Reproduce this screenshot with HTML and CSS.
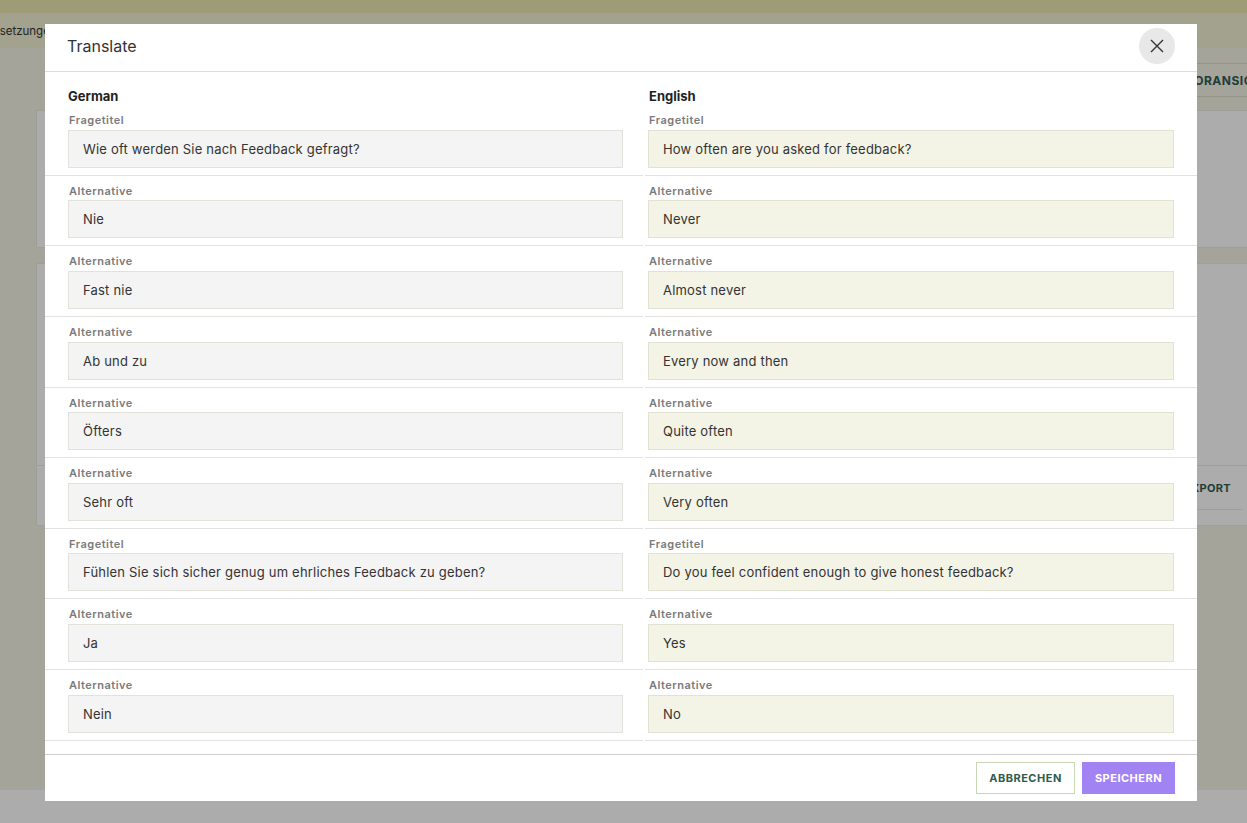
FILE: index.html
```html
<!DOCTYPE html>
<html lang="de">
<head>
<meta charset="utf-8">
<title>Translate</title>
<link rel="stylesheet" href="styles.css">
</head>
<body>
<div class="page">
  <div class="topbar"></div>
  <div class="subbar"><span class="crumb">Übersetzungen</span></div>
  <main class="content">
    <div class="toolbar"><button class="ghost-btn">VORANSICHT</button></div>
    <section class="card card-one"></section>
    <section class="card card-two">
      <div class="card-actions"><button class="ghost-btn export">EXPORT</button></div>
    </section>
  </main>
</div>
<div class="overlay"></div>

<div class="modal" role="dialog">
  <header class="modal-head">
    <h2 class="modal-title">Translate</h2>
    <button class="close-btn" aria-label="close">
      <svg width="14" height="14" viewBox="0 0 14 14"><path d="M1 1 L13 13 M13 1 L1 13" stroke="#333" stroke-width="1.4" fill="none"/></svg>
    </button>
  </header>
  <div class="modal-body">
    <div class="row row-head">
      <div class="cell left"><span class="lang">German</span></div>
      <div class="cell right"><span class="lang">English</span></div>
    </div>

    <div class="row">
      <div class="cell left"><div class="label">Fragetitel</div><div class="field">Wie oft werden Sie nach Feedback gefragt?</div></div>
      <div class="cell right"><div class="label">Fragetitel</div><div class="field en">How often are you asked for feedback?</div></div>
    </div>
    <div class="row">
      <div class="cell left"><div class="label">Alternative</div><div class="field">Nie</div></div>
      <div class="cell right"><div class="label">Alternative</div><div class="field en">Never</div></div>
    </div>
    <div class="row">
      <div class="cell left"><div class="label">Alternative</div><div class="field">Fast nie</div></div>
      <div class="cell right"><div class="label">Alternative</div><div class="field en">Almost never</div></div>
    </div>
    <div class="row">
      <div class="cell left"><div class="label">Alternative</div><div class="field">Ab und zu</div></div>
      <div class="cell right"><div class="label">Alternative</div><div class="field en">Every now and then</div></div>
    </div>
    <div class="row">
      <div class="cell left"><div class="label">Alternative</div><div class="field">Öfters</div></div>
      <div class="cell right"><div class="label">Alternative</div><div class="field en">Quite often</div></div>
    </div>
    <div class="row">
      <div class="cell left"><div class="label">Alternative</div><div class="field">Sehr oft</div></div>
      <div class="cell right"><div class="label">Alternative</div><div class="field en">Very often</div></div>
    </div>
    <div class="row">
      <div class="cell left"><div class="label">Fragetitel</div><div class="field">Fühlen Sie sich sicher genug um ehrliches Feedback zu geben?</div></div>
      <div class="cell right"><div class="label">Fragetitel</div><div class="field en">Do you feel confident enough to give honest feedback?</div></div>
    </div>
    <div class="row">
      <div class="cell left"><div class="label">Alternative</div><div class="field">Ja</div></div>
      <div class="cell right"><div class="label">Alternative</div><div class="field en">Yes</div></div>
    </div>
    <div class="row">
      <div class="cell left"><div class="label">Alternative</div><div class="field">Nein</div></div>
      <div class="cell right"><div class="label">Alternative</div><div class="field en">No</div></div>
    </div>
  </div>
  <footer class="modal-foot">
    <button class="btn btn-cancel">ABBRECHEN</button>
    <button class="btn btn-save">SPEICHERN</button>
  </footer>
</div>
</body>
</html>
```
FILE: styles.css
```css
* { box-sizing: border-box; }
html, body { margin: 0; padding: 0; overflow: hidden; }
body {
  width: 1247px;
  height: 823px;
  background: #ffffff;
  font-family: Inter, "Noto Sans", "Liberation Sans", sans-serif;
  color: #333;
}

/* underlying page */
.page { width: 1247px; }
.topbar { height: 13px; background: #e9e7b0; }
.subbar {
  height: 35px;
  background: #f2f1d4;
  display: flex;
  align-items: center;
  font-size: 11.5px;
  color: #333;
}
.crumb { margin-left: -27px; }
.content {
  height: 742px;
  background: #f3f3e5;
  padding: 15px 0 0 36px;
}
.toolbar {
  display: flex;
  justify-content: flex-end;
  margin-right: -37px;
}
.ghost-btn {
  height: 34px;
  padding: 0 12px;
  border: 1px solid #dcdccb;
  background: transparent;
  font-family: inherit;
  font-size: 12px;
  font-weight: 700;
  letter-spacing: 0.5px;
  color: #2f5b55;
}
.card {
  background: #fff;
  border: 1px solid #ecece4;
  margin-right: -14px;
}
.card-one { height: 138px; margin-top: 13px; }
.card-two {
  height: 263px;
  margin-top: 15px;
  display: flex;
  flex-direction: column;
  justify-content: flex-end;
  padding-bottom: 15px;
}
.card-actions {
  display: flex;
  justify-content: flex-end;
  padding-right: 17px;
  border-top: 1px solid #ecece4;
}
.export {
  height: 44px;
  border: none;
  border-bottom: 1px solid #ecece4;
  font-size: 11px;
  letter-spacing: 0.3px;
}

.overlay {
  position: fixed;
  inset: 0;
  background: rgba(0, 0, 0, 0.325);
}

/* modal */
.modal {
  position: fixed;
  left: 45px;
  top: 24px;
  width: 1152px;
  height: 777px;
  background: #fff;
  display: flex;
  flex-direction: column;
}
.modal-head {
  height: 48px;
  flex: none;
  border-bottom: 1px solid #dedede;
  display: flex;
  align-items: center;
  justify-content: space-between;
  padding: 0 22px 3px 22px;
}
.modal-title {
  margin: 0;
  font-size: 16px;
  font-weight: 400;
  color: #333;
}
.close-btn {
  width: 36px;
  height: 36px;
  border-radius: 50%;
  border: none;
  background: #e8e8e8;
  display: flex;
  align-items: center;
  justify-content: center;
  padding: 0;
}
.modal-body {
  flex: 1;
  overflow: hidden;
  padding-top: 15px;
}
.row {
  display: grid;
  grid-template-columns: 598px 552px;
  column-gap: 2px;
}
.cell {
  border-bottom: 1px solid #e2e2e2;
  padding-top: 8px;
  padding-bottom: 7px;
}
.cell.left { padding-left: 23px; padding-right: 20px; }
.cell.right { padding-left: 3px; padding-right: 23px; }
.row-head .cell {
  border-bottom: none;
  padding-top: 0;
  padding-bottom: 0;
  line-height: 16px;
  margin-bottom: 1px;
}
.lang {
  font-size: 13px;
  font-weight: 700;
  color: #222;
}
.row-head .cell.right .lang { padding-left: 1px; }
.label {
  font-size: 11px;
  font-weight: 600;
  line-height: 14.625px;
  letter-spacing: 0.5px;
  color: #7a7a7a;
  padding-left: 1px;
  margin-bottom: 2px;
}
.field {
  height: 38px;
  border: 1px solid #e2e2da;
  background: #f4f4f4;
  padding: 0 14px;
  font-size: 13px;
  letter-spacing: 0.2px;
  color: #333;
  display: flex;
  align-items: center;
  white-space: nowrap;
}
.field.en {
  background: #f4f4e6;
  border-color: #e2e2d2;
}

.modal-foot {
  height: 47px;
  flex: none;
  border-top: 1px solid #cfcfcf;
  display: flex;
  justify-content: flex-end;
  align-items: flex-start;
  gap: 7px;
  padding: 7px 22px 0 22px;
}
.btn {
  height: 32px;
  font-family: inherit;
  font-size: 11px;
  font-weight: 700;
  letter-spacing: 0.5px;
  padding: 0;
}
.btn-cancel {
  width: 99px;
  background: #fff;
  border: 1px solid #c6d8b4;
  color: #2f5b4f;
}
.btn-save {
  width: 93px;
  background: #a283f4;
  border: none;
  color: #fff;
}
```
